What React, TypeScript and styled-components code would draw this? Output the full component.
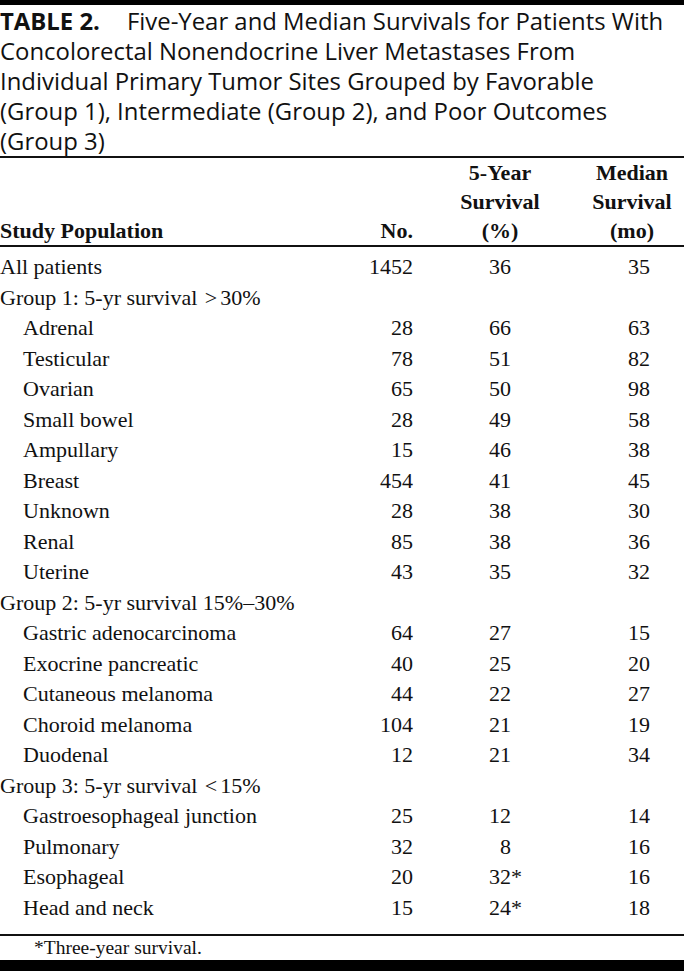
import React from "react";
import styled, { createGlobalStyle } from "styled-components";

const Global = createGlobalStyle`
  html, body { margin: 0; padding: 0; background: #fff; overflow: hidden; }
  body { width: 684px; }
`;

const Page = styled.div`
  width: 684px;
  border-top: 5px solid #000;
  border-bottom: 11px solid #000;
  color: #111;
  box-sizing: border-box;
`;

const Caption = styled.div`
  font-family: "Open Sans", "Lato", sans-serif;
  font-size: 23.9px;
  line-height: 30px;
  padding: 1px 0 0 0;
  border-bottom: 2px solid #111;
  white-space: nowrap;
`;

const Label = styled.span`
  font-weight: 700;
  margin-right: 27px;
`;

const Grid = styled.div`
  display: grid;
  grid-template-columns: 330px 90px 160px 104px;
  font-family: "Liberation Serif", "Times New Roman", serif;
  font-size: 22px;
`;

const HeadCell = styled.div<{ $align: "left" | "right" | "center"; $pr?: number }>`
  font-weight: 700;
  line-height: 29px;
  text-align: ${(p) => p.$align};
  padding-right: ${(p) => p.$pr ?? 0}px;
  align-self: end;
`;

const HeadRule = styled.div`
  grid-column: 1 / -1;
  border-bottom: 2px solid #111;
  margin-bottom: 5px;
`;

const Cell = styled.div<{ $align?: "left" | "right"; $pr?: number; $indent?: boolean }>`
  height: 30.5px;
  line-height: 30.5px;
  white-space: nowrap;
  text-align: ${(p) => p.$align ?? "left"};
  padding-right: ${(p) => p.$pr ?? 0}px;
  padding-left: ${(p) => (p.$indent ? 23 : 0)}px;
`;

const Star = styled.span`
  display: inline-block;
  width: 0;
  overflow: visible;
`;

const Rel = styled.span`
  padding: 0 3px 0 2px;
`;

const Footer = styled.div`
  border-top: 2px solid #111;
  margin-top: 11px;
  font-family: "Liberation Serif", "Times New Roman", serif;
  font-size: 19.5px;
  line-height: 24px;
  padding: 0 0 0 34px;
`;

type Row = {
  name: React.ReactNode;
  key: string;
  group?: boolean;
  n?: string;
  s?: string;
  m?: string;
  star?: boolean;
  top?: boolean;
};

const rows: Row[] = [
  { key: "all", name: "All patients", top: true, n: "1452", s: "36", m: "35" },
  {
    key: "g1",
    name: (
      <>
        Group 1: 5-yr survival <Rel>&gt;</Rel>30%
      </>
    ),
    group: true,
  },
  { key: "Adrenal", name: "Adrenal", n: "28", s: "66", m: "63" },
  { key: "Testicular", name: "Testicular", n: "78", s: "51", m: "82" },
  { key: "Ovarian", name: "Ovarian", n: "65", s: "50", m: "98" },
  { key: "Small bowel", name: "Small bowel", n: "28", s: "49", m: "58" },
  { key: "Ampullary", name: "Ampullary", n: "15", s: "46", m: "38" },
  { key: "Breast", name: "Breast", n: "454", s: "41", m: "45" },
  { key: "Unknown", name: "Unknown", n: "28", s: "38", m: "30" },
  { key: "Renal", name: "Renal", n: "85", s: "38", m: "36" },
  { key: "Uterine", name: "Uterine", n: "43", s: "35", m: "32" },
  { key: "g2", name: "Group 2: 5-yr survival 15%\u201330%", group: true },
  { key: "Gastric", name: "Gastric adenocarcinoma", n: "64", s: "27", m: "15" },
  { key: "Exocrine", name: "Exocrine pancreatic", n: "40", s: "25", m: "20" },
  { key: "Cutaneous", name: "Cutaneous melanoma", n: "44", s: "22", m: "27" },
  { key: "Choroid", name: "Choroid melanoma", n: "104", s: "21", m: "19" },
  { key: "Duodenal", name: "Duodenal", n: "12", s: "21", m: "34" },
  {
    key: "g3",
    name: (
      <>
        Group 3: 5-yr survival <Rel>&lt;</Rel>15%
      </>
    ),
    group: true,
  },
  { key: "GE", name: "Gastroesophageal junction", n: "25", s: "12", m: "14" },
  { key: "Pulmonary", name: "Pulmonary", n: "32", s: "8", m: "16" },
  { key: "Esophageal", name: "Esophageal", n: "20", s: "32", m: "16", star: true },
  { key: "Head", name: "Head and neck", n: "15", s: "24", m: "18", star: true },
];

export default function App() {
  return (
    <>
      <Global />
      <Page>
        <Caption>
          <Label>TABLE 2.</Label>
          Five-Year and Median Survivals for Patients With
          <br />
          Concolorectal Nonendocrine Liver Metastases From
          <br />
          Individual Primary Tumor Sites Grouped by Favorable
          <br />
          (Group 1), Intermediate (Group 2), and Poor Outcomes
          <br />
          (Group 3)
        </Caption>
        <Grid>
          <HeadCell $align="left">Study Population</HeadCell>
          <HeadCell $align="right" $pr={7}>No.</HeadCell>
          <HeadCell $align="center">
            5-Year
            <br />
            Survival
            <br />
            (%)
          </HeadCell>
          <HeadCell $align="center" $pr={0}>
            Median
            <br />
            Survival
            <br />
            (mo)
          </HeadCell>
          <HeadRule />
          {rows.map((r) => (
            <React.Fragment key={r.key}>
              <Cell $indent={!r.group && !r.top}>{r.name}</Cell>
              <Cell $align="right" $pr={7}>{r.n ?? ""}</Cell>
              <Cell $align="right" $pr={69}>
                {r.s ?? ""}
                {r.star ? <Star>*</Star> : null}
              </Cell>
              <Cell $align="right" $pr={34}>{r.m ?? ""}</Cell>
            </React.Fragment>
          ))}
        </Grid>
        <Footer>*Three-year survival.</Footer>
      </Page>
    </>
  );
}
